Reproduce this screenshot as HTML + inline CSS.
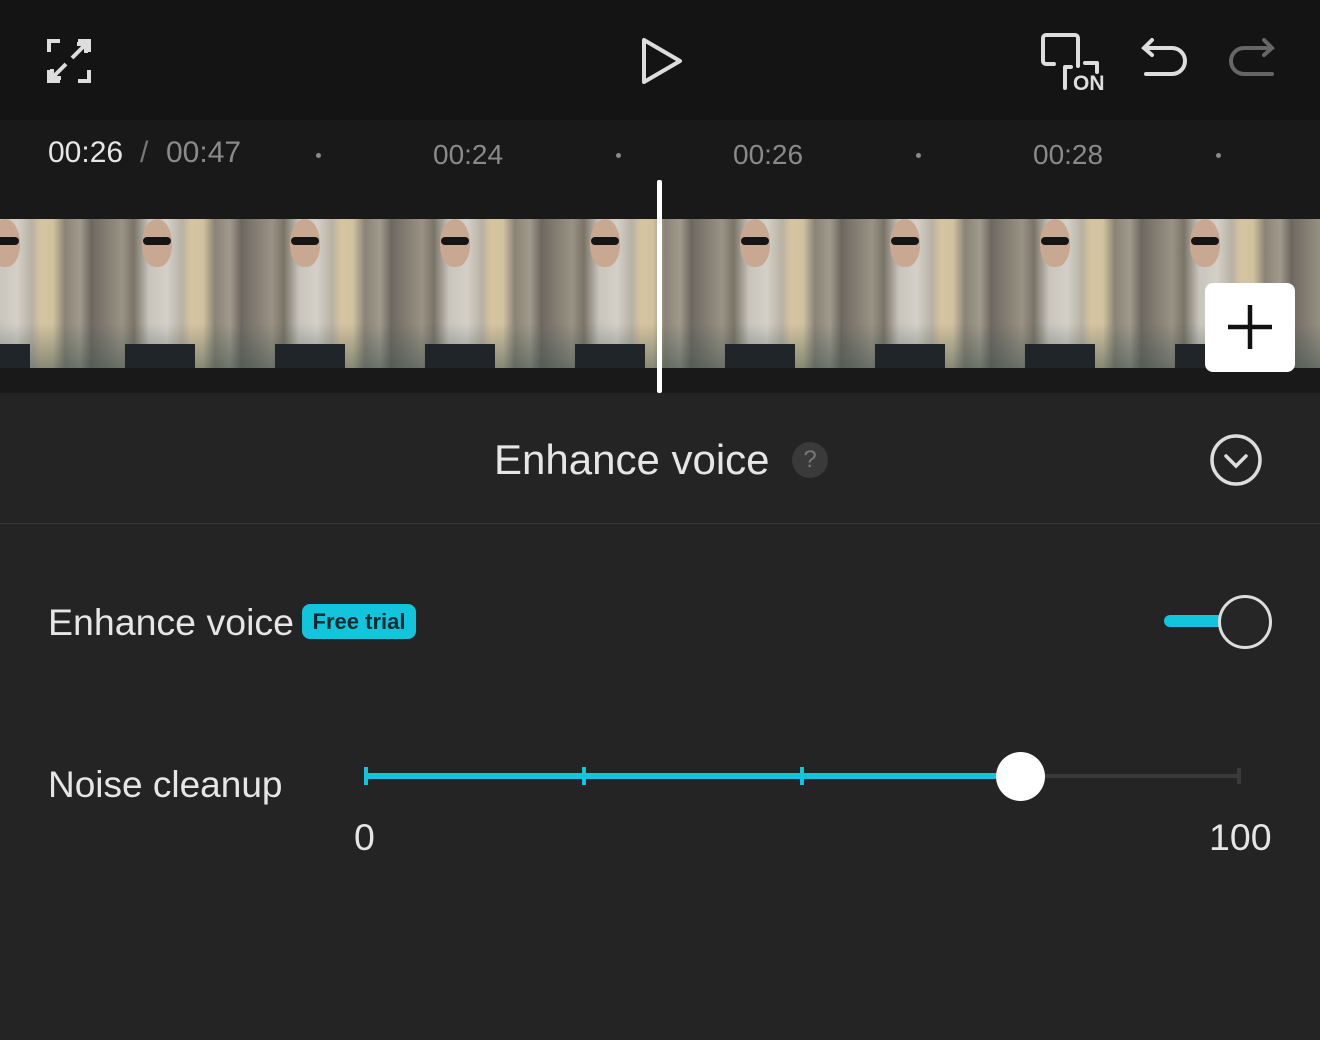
<!DOCTYPE html>
<html><head><style>
*{margin:0;padding:0;box-sizing:border-box}
body{width:1320px;height:1040px;background:#242424;font-family:"Liberation Sans",sans-serif;position:relative;overflow:hidden;color:#e8e8e8}
.top{position:absolute;left:0;top:0;width:1320px;height:120px;background:#141414}
.tl{position:absolute;left:0;top:120px;width:1320px;height:273px;background:#191919}
.t{position:absolute;font-size:28px;color:#8a8a8a}
.dot{position:absolute;width:5px;height:5px;border-radius:50%;background:#8a8a8a;top:153px}
.strip{position:absolute;left:0;top:219px;width:1320px;height:149px;overflow:hidden;background:#8a8070}
.fr{position:absolute;top:0;width:150px;height:149px;background:
linear-gradient(180deg,rgba(0,0,0,0) 0,rgba(0,0,0,0) 70%,rgba(60,80,75,.5) 100%),
linear-gradient(90deg,#6e6a62 0,#9a9284 20%,#7a7468 28%,#c8c4bc 38%,#d4d0c8 50%,#b8b2a4 60%,#d6c4a0 66%,#d2c2a0 74%,#8a8476 82%,#a09a8c 92%,#6a665e 100%)}
.head{position:absolute;top:0;width:30px;height:48px;border-radius:50% 50% 45% 45%;background:#c8a890}
.gl{position:absolute;top:18px;width:28px;height:8px;background:#151515;border-radius:4px}
.leg{position:absolute;bottom:0;width:70px;height:24px;background:#20252a}
.lbl{position:absolute;font-size:37.5px;color:#e6e6e6}
</style></head><body>
<div class="top"></div>
<svg style="position:absolute;left:46px;top:38px" width="46" height="46" viewBox="0 0 46 46" fill="none" stroke="#ddd" stroke-width="4">
<path d="M3 14V3h11M32 3h11v11M43 32v11H32M14 43H3V32M26 20L39 7M31 6h9v9M20 26L7 39M6 31v9h9"/></svg>
<svg style="position:absolute;left:640px;top:37px" width="44" height="48" viewBox="0 0 44 48" fill="none" stroke="#ddd" stroke-width="4" stroke-linejoin="round"><path d="M4 3v42l36-21z"/></svg>
<svg style="position:absolute;left:1038px;top:30px" width="72" height="64" viewBox="0 0 72 64" fill="none" stroke="#ddd" stroke-width="4" stroke-linecap="round" stroke-linejoin="round"><path d="M16 34H8a3 3 0 0 1-3-3V8a3 3 0 0 1 3-3h29a3 3 0 0 1 3 3v28M47 33h12v9M33 37h-6v21"/><text x="35" y="60" fill="#ddd" stroke="none" font-size="21" font-weight="bold" font-family="Liberation Sans">ON</text></svg>
<svg style="position:absolute;left:1138px;top:36px" width="50" height="48" viewBox="0 0 50 48" fill="none" stroke="#ddd" stroke-width="4" stroke-linecap="round"><path d="M14 4L6 12l8 7M6 12h28a11 11 0 0 1 0 26H8"/></svg>
<svg style="position:absolute;left:1228px;top:36px" width="50" height="48" viewBox="0 0 50 48" fill="none" stroke="#666" stroke-width="4" stroke-linecap="round"><path d="M36 4l8 8-8 7M44 12H16a11 11 0 0 0 0 26h28"/></svg>
<div class="tl"></div>
<div class="t" style="left:48px;top:136px;color:#e6e6e6;font-size:30px">00:26</div>
<div class="t" style="left:140px;top:136px;color:#777;font-size:30px">/</div>
<div class="t" style="left:166px;top:136px;font-size:30px">00:47</div>
<div class="t" style="left:433px;top:139px">00:24</div>
<div class="t" style="left:733px;top:139px">00:26</div>
<div class="t" style="left:1033px;top:139px">00:28</div>
<div class="dot" style="left:316px"></div><div class="dot" style="left:616px"></div><div class="dot" style="left:916px"></div><div class="dot" style="left:1216px"></div>
<div class="strip">
<div class="fr" style="left:-58px"></div><div class="fr" style="left:92px"></div><div class="fr" style="left:242px"></div><div class="fr" style="left:392px"></div><div class="fr" style="left:542px"></div><div class="fr" style="left:692px"></div><div class="fr" style="left:842px"></div><div class="fr" style="left:992px"></div><div class="fr" style="left:1142px"></div><div class="fr" style="left:1292px"></div>
<div class="head" style="left:-10px"></div><div class="head" style="left:142px"></div><div class="head" style="left:290px"></div><div class="head" style="left:440px"></div><div class="head" style="left:590px"></div><div class="head" style="left:740px"></div><div class="head" style="left:890px"></div><div class="head" style="left:1040px"></div><div class="head" style="left:1190px"></div>
<div class="gl" style="left:-9px"></div><div class="gl" style="left:143px"></div><div class="gl" style="left:291px"></div><div class="gl" style="left:441px"></div><div class="gl" style="left:591px"></div><div class="gl" style="left:741px"></div><div class="gl" style="left:891px"></div><div class="gl" style="left:1041px"></div><div class="gl" style="left:1191px"></div>
<div class="leg" style="left:-40px"></div><div class="leg" style="left:125px"></div><div class="leg" style="left:275px"></div><div class="leg" style="left:425px"></div><div class="leg" style="left:575px"></div><div class="leg" style="left:725px"></div><div class="leg" style="left:875px"></div><div class="leg" style="left:1025px"></div><div class="leg" style="left:1175px"></div>
</div>
<div style="position:absolute;left:657px;top:180px;width:5px;height:213px;background:#fff;border-radius:2px"></div>
<div style="position:absolute;left:1205px;top:283px;width:90px;height:89px;background:#fff;border-radius:8px"></div>
<svg style="position:absolute;left:1226px;top:303px" width="48" height="48" viewBox="0 0 48 48" stroke="#111" stroke-width="4.5"><path d="M24 2v44M2 24h44"/></svg>
<div style="position:absolute;left:0;top:393px;width:1320px;height:131px;border-bottom:1px solid #383838"></div>
<div class="lbl" style="left:494px;top:436px;font-size:42px">Enhance voice</div>
<div style="position:absolute;left:792px;top:442px;width:36px;height:36px;border-radius:50%;background:#3a3a3a;color:#777;font-size:24px;text-align:center;line-height:36px">?</div>
<svg style="position:absolute;left:1209px;top:433px" width="54" height="54" viewBox="0 0 54 54" fill="none" stroke="#ddd" stroke-width="3.5"><circle cx="27" cy="27" r="24"/><path d="M17 23l10 10 10-10" stroke-linecap="round"/></svg>
<div class="lbl" style="left:48px;top:601px">Enhance voice</div>
<div style="position:absolute;left:302px;top:604px;width:114px;height:35px;background:#12c4dc;border-radius:8px;color:#0a2a30;font-weight:bold;font-size:22px;text-align:center;line-height:35px">Free trial</div>
<div style="position:absolute;left:1164px;top:615px;width:80px;height:12px;background:#12c4dc;border-radius:6px"></div>
<div style="position:absolute;left:1218px;top:595px;width:54px;height:54px;border-radius:50%;background:#262626;border:3px solid #ddd"></div>
<div class="lbl" style="left:48px;top:764px;font-size:37px">Noise cleanup</div>
<div style="position:absolute;left:366px;top:774px;width:874px;height:4px;background:#3a3a3a"></div>
<div style="position:absolute;left:366px;top:773px;width:654px;height:6px;background:#12c4dc"></div>
<div style="position:absolute;left:364px;top:767px;width:4px;height:18px;background:#12c4dc"></div>
<div style="position:absolute;left:582px;top:767px;width:4px;height:18px;background:#12c4dc"></div>
<div style="position:absolute;left:800px;top:767px;width:4px;height:18px;background:#12c4dc"></div>
<div style="position:absolute;left:1237px;top:768px;width:4px;height:16px;background:#3a3a3a"></div>
<div style="position:absolute;left:996px;top:752px;width:49px;height:49px;border-radius:50%;background:#fff"></div>
<div class="lbl" style="left:354px;top:816px">0</div>
<div class="lbl" style="left:1209px;top:816px">100</div>
</body></html>
